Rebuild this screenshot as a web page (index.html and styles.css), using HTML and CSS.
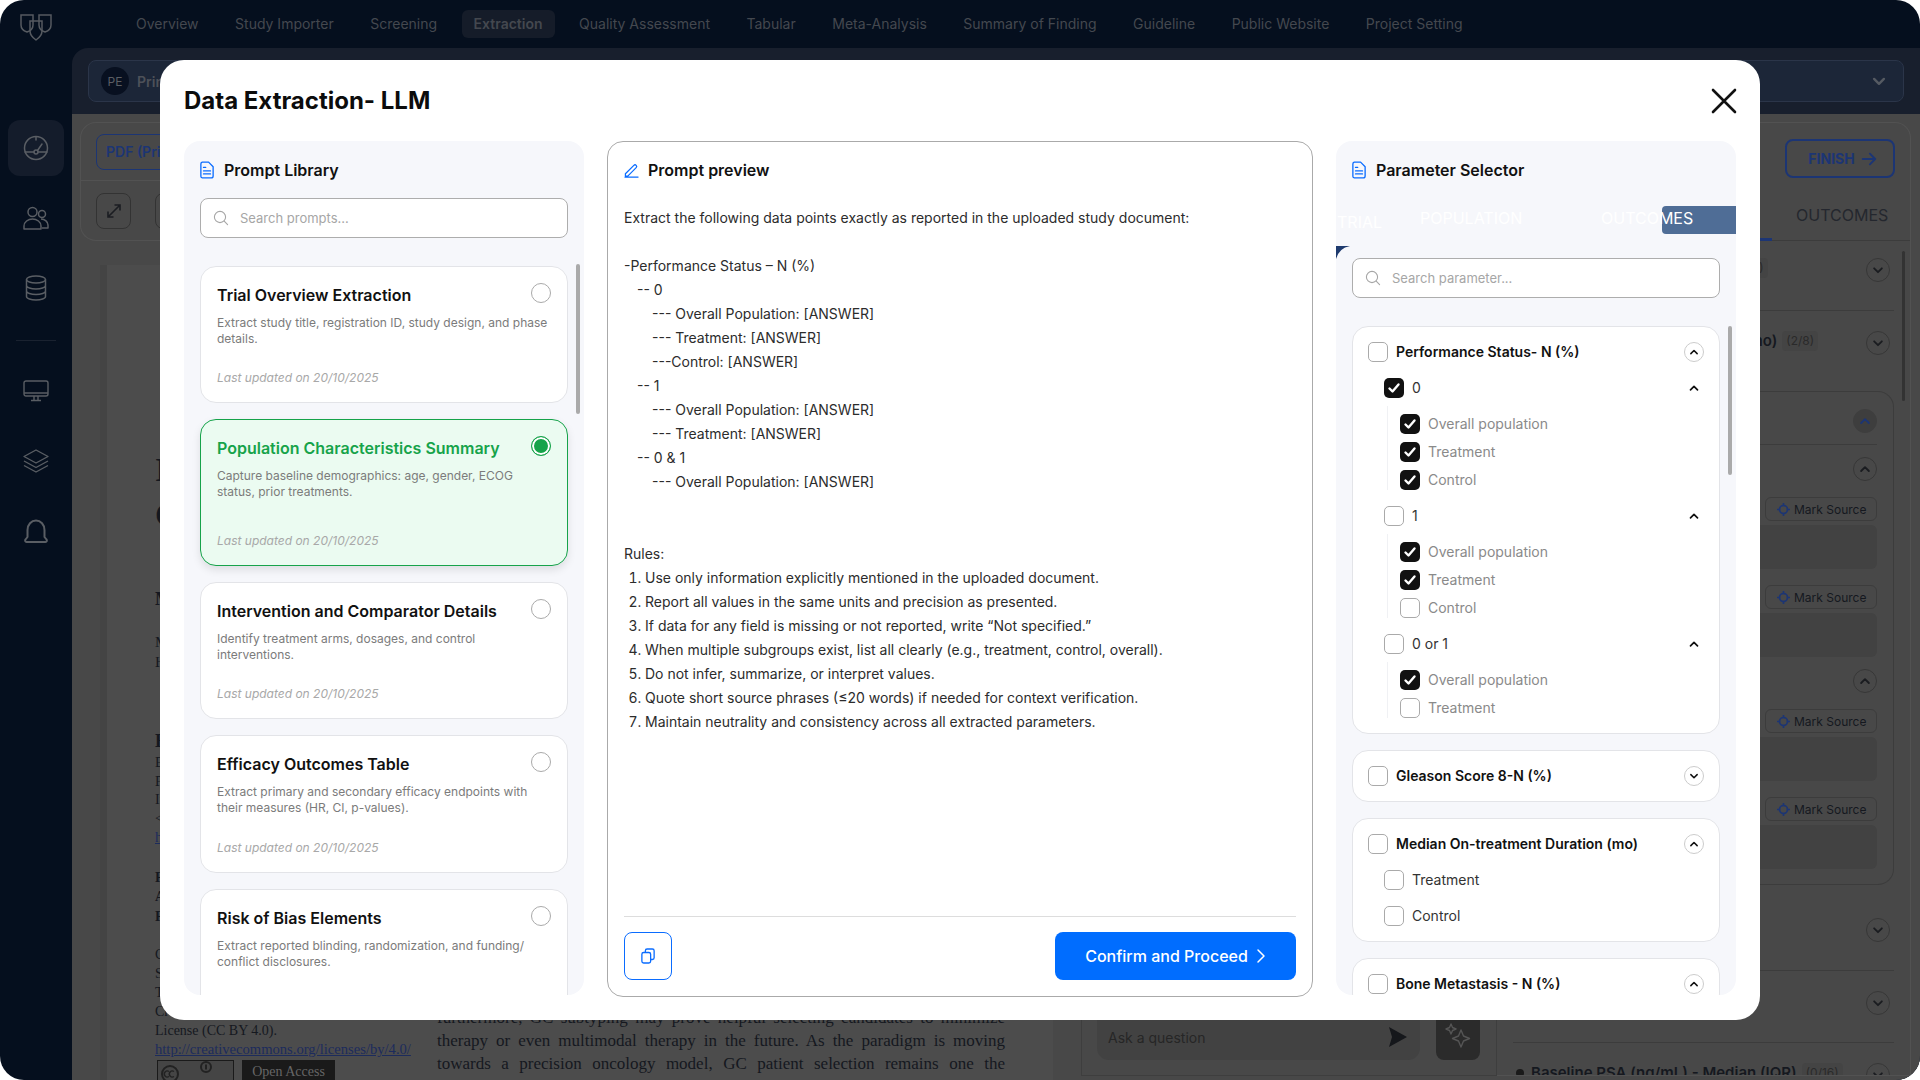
FILE: index.html
```html
<!DOCTYPE html>
<html lang="en">
  <head>
    <meta charset="UTF-8" />
    <meta name="viewport" content="width=device-width, initial-scale=1.0" />
    <title>Data Extraction - LLM</title>
    <link rel="stylesheet" href="styles.css">
  </head>
  <body>
    <svg class="sprite" width="0" height="0">
      <symbol id="i-check" viewBox="0 0 20 20"><path d="M5.500 10.500l3 3 6-7" fill="none" stroke="currentColor" stroke-width="2.400" stroke-linecap="round" stroke-linejoin="round"/></symbol>
      <symbol id="i-up" viewBox="0 0 20 20"><path d="M6.500 11.800L10 8.300l3.500 3.500" fill="none" stroke="currentColor" stroke-width="1.700" stroke-linecap="round" stroke-linejoin="round"/></symbol>
      <symbol id="i-down" viewBox="0 0 20 20"><path d="M6.500 8.500L10 12l3.500-3.500" fill="none" stroke="currentColor" stroke-width="1.700" stroke-linecap="round" stroke-linejoin="round"/></symbol>
      <symbol id="i-doc" viewBox="0 0 16 20"><path d="M2.600 1h7.200L15 6.200v10.600A2.200 2.200 0 0 1 12.800 19H2.600A2 2 0 0 1 1 16.800V3.200A2.200 2.200 0 0 1 2.600 1z" fill="none" stroke="currentColor" stroke-width="1.500" stroke-linejoin="round"/><path d="M4 7h2.500M4 11h8M4 14.500h8" fill="none" stroke="currentColor" stroke-width="1.500" stroke-linecap="round"/></symbol>
      <symbol id="i-search" viewBox="0 0 16 16"><circle cx="7" cy="7" r="5.600" fill="none" stroke="currentColor" stroke-width="1.100"/><path d="M11.200 11.200L14.600 14.600" fill="none" stroke="currentColor" stroke-width="1.100" stroke-linecap="round"/></symbol>
      <symbol id="i-target" viewBox="0 0 14 14"><circle cx="7" cy="7" r="4.300" fill="none" stroke="currentColor" stroke-width="1.800"/><path d="M7 0v3.500M7 10.500V14M0 7h3.500M10.500 7H14" fill="none" stroke="currentColor" stroke-width="1.800"/></symbol>
    </svg>

    <div class="app">
      <nav class="topnav">
        <svg class="logo" width="32" height="28" viewBox="0 0 32 28" fill="none" stroke="#565a60" stroke-width="1.500">
          <path d="M1 2h12v10c0 4-3 6-6 7-3-1-6-3-6-7z"/>
          <path d="M19 2h12v10c0 4-3 6-6 7-3-1-6-3-6-7z"/>
          <path d="M10 8h12v10c0 4-3 7-6 9-3-2-6-5-6-9z"/>
        </svg>
        <div class="nav-links">
          <a class="nav-link">Overview</a>
          <a class="nav-link">Study Importer</a>
          <a class="nav-link">Screening</a>
          <a class="nav-link active">Extraction</a>
          <a class="nav-link">Quality Assessment</a>
          <a class="nav-link">Tabular</a>
          <a class="nav-link">Meta-Analysis</a>
          <a class="nav-link">Summary of Finding</a>
          <a class="nav-link">Guideline</a>
          <a class="nav-link">Public Website</a>
          <a class="nav-link">Project Setting</a>
        </div>
      </nav>

      <div class="shell">
        <aside class="sidebar">
          <div class="side-item active">
            <svg width="26" height="26" viewBox="0 0 26 26" fill="none" stroke="#5a5e64" stroke-width="1.500" stroke-linecap="round"><circle cx="13" cy="13" r="11.500"/><circle cx="13" cy="17" r="2"/><path d="M14.500 15.500L19 9M13 2v3M2 17h9M15 17h9"/></svg>
          </div>
          <div class="side-item">
            <svg width="26" height="24" viewBox="0 0 26 24" fill="none" stroke="#5a5e64" stroke-width="1.500" stroke-linejoin="round"><circle cx="9.500" cy="6" r="4.500"/><circle cx="19" cy="8" r="3.500"/><path d="M1 23v-3c0-4 4-7 8.500-7s8.500 3 8.500 7v3z"/><path d="M18 13c4 0 7 3 7 6v3h-6"/></svg>
          </div>
          <div class="side-item">
            <svg width="22" height="26" viewBox="0 0 22 26" fill="none" stroke="#5a5e64" stroke-width="1.500"><ellipse cx="11" cy="4.500" rx="9.500" ry="3.500"/><path d="M1.500 4.500v17c0 2 4.500 3.500 9.500 3.500s9.500-1.500 9.500-3.500v-17M1.500 10.500c0 2 4.500 3.500 9.500 3.500s9.500-1.500 9.500-3.500M1.500 16c0 2 4.500 3.500 9.500 3.500s9.500-1.500 9.500-3.500"/></svg>
          </div>
          <hr class="side-rule">
          <div class="side-item">
            <svg width="26" height="22" viewBox="0 0 26 22" fill="none" stroke="#5a5e64" stroke-width="1.400" stroke-linejoin="round"><rect x="1" y="1" width="24" height="15" rx="2"/><path d="M1 13h24M11 16v4M15 16v4M8 20.500h10"/></svg>
          </div>
          <div class="side-item">
            <svg width="26" height="24" viewBox="0 0 26 24" fill="none" stroke="#5a5e64" stroke-width="1.400" stroke-linejoin="round"><path d="M13 1l12 6.500L13 14 1 7.500z"/><path d="M1 12l12 6.500L25 12M1 16.500L13 23l12-6.500"/></svg>
          </div>
          <div class="side-item">
            <svg width="26" height="24" viewBox="0 0 26 24" fill="none" stroke="#5a5e64" stroke-width="2" stroke-linejoin="round"><path d="M4.500 18V11a8.500 9.500 0 0 1 17 0v7l2 2.500a1.500 1.500 0 0 1-1 2.500H3.500a1.500 1.500 0 0 1-1-2.500z"/></svg>
          </div>
        </aside>

        <main class="workspace">
          <div class="project-bar">
            <span class="avatar">PE</span>
            <span class="project-name">Primary Endpoint Review</span>
            <svg class="project-caret" width="28" height="28"><use href="#i-down"/></svg>
          </div>

          <div class="work-area">
            <section class="reader">
              <div class="reader-tools">
                <div class="tool-row">
                  <span class="pdf-tab">PDF (Primary)</span>
                </div>
                <div class="tool-row">
                  <span class="tool-btn">
                    <svg width="18" height="18" viewBox="0 0 18 18" fill="none" stroke="#1b1d22" stroke-width="1.600"><path d="M3 15l12-12M9.500 3H15v5.500M8.500 15H3V9.500"/></svg>
                  </span>
                  <span class="tool-btn"></span>
                </div>
              </div>
              <div class="pdf-page">
                <div class="pdf-left">
                  <h1 class="pdf-title">Impact<br>Cancer</h1>
                  <h3 class="pdf-bold">Methods</h3>
                  <p class="pdf-para gap-a">Men with<br>High risk</p>
                  <h3 class="pdf-bold gap-b">Highlights</h3>
                  <p class="pdf-line">Evidence<br>Patients<br>In this<br>&lt;0.001<br><a class="pdf-link">https</a></p>
                  <p class="pdf-line bold gap-c">Footnote<br>Author<br>Funding</p>
                  <p class="pdf-note gap-d">Copyright<br>Springer<br>The article<br>Creative<br>License (CC BY 4.0).<br><a class="pdf-link">http://creativecommons.org/licenses/by/4.0/</a></p>
                  <div class="pdf-badges">
                    <span class="cc-badge">
                      <svg width="76" height="22" viewBox="0 0 76 22" fill="none" stroke="#222" stroke-width="2"><circle cx="12" cy="13" r="8"/><path d="M11 10.500a3 3 0 1 0 0 5M16 10.500a3 3 0 1 0 0 5" stroke-width="1.400"/><circle cx="48" cy="6" r="5"/><path d="M48 3.500v5"/></svg>
                    </span>
                    <span class="oa-badge">Open Access</span>
                  </div>
                </div>
                <div class="pdf-right">
                  <div class="pdf-text">furthermore, GC subtyping may prove helpful selecting candidates to minimize</div>
                  <div class="pdf-text">therapy or even multimodal therapy in the future. As the paradigm is moving</div>
                  <div class="pdf-text">towards a precision oncology model, GC patient selection remains one the</div>
                </div>
              </div>
            </section>

            <section class="chat">
              <div class="chat-input">
                <span class="chat-hint">Ask a question</span>
                <svg width="20" height="22" viewBox="0 0 20 22" fill="#15171b"><path d="M1 1l18 10L1 21l3-10z"/></svg>
              </div>
              <div class="chat-spark">
                <svg width="30" height="30" viewBox="0 0 30 30" fill="none" stroke="#555" stroke-width="1.400" stroke-linejoin="round"><path d="M18 9l2.500 6 6 2.500-6 2.500-2.500 6-2.500-6-6-2.500 6-2.500zM8 3l1.500 3.500L13 8 9.500 9.500 8 13 6.500 9.500 3 8l3.500-1.500z"/></svg>
              </div>
            </section>

            <section class="fields">
              <div class="fields-top">
                <span class="finish-btn">FINISH
                  <svg width="16" height="16" viewBox="0 0 18 16" fill="none" stroke="currentColor" stroke-width="2.200" stroke-linecap="round" stroke-linejoin="round"><path d="M2 8h14M10 2l6 6-6 6"/></svg>
                </span>
              </div>
              <div class="field-tabs">
                <span class="field-tab">TRIAL</span>
                <span class="field-tab active">POPULATION</span>
                <span class="field-tab">OUTCOMES</span>
              </div>
              <div class="field-scroll"></div>
              <div class="field-list">
                <div class="field-item first">
                  <span class="field-name">Median Follow-up Duration</span><span class="field-count">(3/8)</span>
                  <span class="round-btn"><svg width="22" height="22"><use href="#i-down"/></svg></span>
                </div>
                <div class="field-item second">
                  <span class="field-name">Median On-treatment Duration (mo)</span><span class="field-count">(2/8)</span>
                  <span class="round-btn"><svg width="22" height="22"><use href="#i-down"/></svg></span>
                </div>
                <div class="field-open">
                  <div class="open-head">
                    <span class="round-btn on"><svg width="22" height="22"><use href="#i-up"/></svg></span>
                  </div>
                  <div class="open-sub">
                    <span class="round-btn"><svg width="22" height="22"><use href="#i-up"/></svg></span>
                  </div>
                  <div class="source">
                    <span class="mark-source"><svg width="13" height="13"><use href="#i-target"/></svg>Mark Source</span>
                    <div class="source-box"></div>
                  </div>
                  <div class="source">
                    <span class="mark-source"><svg width="13" height="13"><use href="#i-target"/></svg>Mark Source</span>
                    <div class="source-box"></div>
                  </div>
                  <div class="open-sub tight">
                    <span class="round-btn"><svg width="22" height="22"><use href="#i-up"/></svg></span>
                  </div>
                  <div class="source">
                    <span class="mark-source"><svg width="13" height="13"><use href="#i-target"/></svg>Mark Source</span>
                    <div class="source-box"></div>
                  </div>
                  <div class="source">
                    <span class="mark-source"><svg width="13" height="13"><use href="#i-target"/></svg>Mark Source</span>
                    <div class="source-box"></div>
                  </div>
                </div>
                <div class="field-item third">
                  <span class="round-btn"><svg width="22" height="22"><use href="#i-down"/></svg></span>
                </div>
                <div class="field-item fourth">
                  <span class="field-sub">1 field</span>
                  <span class="round-btn"><svg width="22" height="22"><use href="#i-down"/></svg></span>
                </div>
                <div class="field-item fifth">
                  <span class="field-dot"></span><span class="field-name">Baseline PSA (ng/mL) - Median (IQR)</span><span class="field-count">(0/16)</span>
                  <span class="round-btn"><svg width="22" height="22"><use href="#i-down"/></svg></span>
                </div>
              </div>
            </section>
          </div>
        </main>
      </div>
    </div>

    <div class="modal">
      <header class="modal-head">
        <h2 class="modal-title">Data Extraction- LLM</h2>
        <svg class="modal-close" width="26" height="26" viewBox="0 0 26 26" fill="none" stroke="#111" stroke-width="2.600" stroke-linecap="round"><path d="M2 2l22 22M24 2L2 24"/></svg>
      </header>

      <div class="modal-body">
        <section class="panel library">
          <h3 class="panel-head"><svg class="blue" width="14" height="18"><use href="#i-doc"/></svg>Prompt Library</h3>
          <label class="search">
            <svg width="16" height="16"><use href="#i-search"/></svg>
            <span>Search prompts...</span>
          </label>
          <div class="thumb library-thumb"></div>
          <div class="prompt-list">
            <article class="prompt">
              <div class="prompt-top"><h4>Trial Overview Extraction</h4><span class="radio"></span></div>
              <p class="prompt-desc">Extract study title, registration ID, study design, and phase details.</p>
              <p class="prompt-date">Last updated on 20/10/2025</p>
            </article>
            <article class="prompt selected">
              <div class="prompt-top"><h4>Population Characteristics Summary</h4><span class="radio"></span></div>
              <p class="prompt-desc">Capture baseline demographics: age, gender, ECOG status, prior treatments.</p>
              <p class="prompt-date">Last updated on 20/10/2025</p>
            </article>
            <article class="prompt">
              <div class="prompt-top"><h4>Intervention and Comparator Details</h4><span class="radio"></span></div>
              <p class="prompt-desc">Identify treatment arms, dosages, and control interventions.</p>
              <p class="prompt-date">Last updated on 20/10/2025</p>
            </article>
            <article class="prompt">
              <div class="prompt-top"><h4>Efficacy Outcomes Table</h4><span class="radio"></span></div>
              <p class="prompt-desc">Extract primary and secondary efficacy endpoints with their measures (HR, CI, p-values).</p>
              <p class="prompt-date">Last updated on 20/10/2025</p>
            </article>
            <article class="prompt">
              <div class="prompt-top"><h4>Risk of Bias Elements</h4><span class="radio"></span></div>
              <p class="prompt-desc">Extract reported blinding, randomization, and funding/ conflict disclosures.</p>
            </article>
          </div>
        </section>

        <section class="panel preview">
          <h3 class="panel-head"><svg class="blue" width="15" height="15" viewBox="0 0 16 16" fill="none" stroke="currentColor" stroke-width="1.300" stroke-linejoin="round" stroke-linecap="round"><path d="M1.500 11.500L10.500 2.500a1.500 1.500 0 0 1 2.500 2.500L4 14H1.500zM1 15h14"/></svg>Prompt preview</h3>
          <div class="preview-text">
            <p>Extract the following data points exactly as reported in the uploaded study document:</p>
            <p class="blank"></p>
            <p>-Performance Status – N (%)</p>
            <p class="lvl-1">-- 0</p>
            <p class="lvl-2">--- Overall Population: [ANSWER]</p>
            <p class="lvl-2">--- Treatment: [ANSWER]</p>
            <p class="lvl-2">---Control: [ANSWER]</p>
            <p class="lvl-1">-- 1</p>
            <p class="lvl-2">--- Overall Population: [ANSWER]</p>
            <p class="lvl-2">--- Treatment: [ANSWER]</p>
            <p class="lvl-1">-- 0 &amp; 1</p>
            <p class="lvl-2">--- Overall Population: [ANSWER]</p>
            <p class="blank wide"></p>
            <p>Rules:</p>
            <ol>
              <li>Use only information explicitly mentioned in the uploaded document.</li>
              <li>Report all values in the same units and precision as presented.</li>
              <li>If data for any field is missing or not reported, write “Not specified.”</li>
              <li>When multiple subgroups exist, list all clearly (e.g., treatment, control, overall).</li>
              <li>Do not infer, summarize, or interpret values.</li>
              <li>Quote short source phrases (≤20 words) if needed for context verification.</li>
              <li>Maintain neutrality and consistency across all extracted parameters.</li>
            </ol>
          </div>
          <footer class="preview-foot">
            <button class="copy-btn">
              <svg width="14" height="16" viewBox="0 0 16 18" fill="none" stroke="currentColor" stroke-width="1.500" stroke-linejoin="round"><rect x="1" y="5" width="10" height="12" rx="2"/><path d="M5 5V3a2 2 0 0 1 2-2h6a2 2 0 0 1 2 2v8a2 2 0 0 1-2 2h-2"/></svg>
            </button>
            <button class="confirm-btn">Confirm and Proceed
              <svg width="10" height="16" viewBox="0 0 10 16" fill="none" stroke="currentColor" stroke-width="1.500" stroke-linecap="round" stroke-linejoin="round"><path d="M2 2l6 6-6 6"/></svg>
            </button>
          </footer>
        </section>

        <section class="panel params">
          <h3 class="panel-head"><svg class="blue" width="14" height="18"><use href="#i-doc"/></svg>Parameter Selector</h3>
          <div class="param-tabs">
            <span class="param-tab-bg"></span>
            <span class="param-tab trial">TRIAL</span>
            <span class="param-tab">POPULATION</span>
            <span class="param-tab">OUTCOMES</span>
          </div>
          <svg class="param-notch" width="14" height="13" viewBox="0 0 14 13"><path d="M0 0h14Q3 2 0 13z" fill="#1e3a6e"/></svg>
          <label class="search">
            <svg width="16" height="16"><use href="#i-search"/></svg>
            <span>Search parameter...</span>
          </label>
          <div class="thumb params-thumb"></div>
          <div class="param-list">
            <div class="param-card">
              <div class="param-scroll">
                <div class="check-row head">
                  <span class="box"></span><span class="check-label">Performance Status- N (%)</span>
                  <span class="circle-btn"><svg width="18" height="18"><use href="#i-up"/></svg></span>
                </div>
                <div class="check-row sub">
                  <span class="box on"><svg width="20" height="20"><use href="#i-check"/></svg></span><span class="check-label">0</span>
                  <svg class="row-caret" width="20" height="20"><use href="#i-up"/></svg>
                </div>
                <div class="leaf-group">
                  <div class="check-row leaf"><span class="box on"><svg width="20" height="20"><use href="#i-check"/></svg></span><span class="check-label">Overall population</span></div>
                  <div class="check-row leaf"><span class="box on"><svg width="20" height="20"><use href="#i-check"/></svg></span><span class="check-label">Treatment</span></div>
                  <div class="check-row leaf"><span class="box on"><svg width="20" height="20"><use href="#i-check"/></svg></span><span class="check-label">Control</span></div>
                </div>
                <div class="check-row sub">
                  <span class="box"></span><span class="check-label">1</span>
                  <svg class="row-caret" width="20" height="20"><use href="#i-up"/></svg>
                </div>
                <div class="leaf-group">
                  <div class="check-row leaf"><span class="box on"><svg width="20" height="20"><use href="#i-check"/></svg></span><span class="check-label">Overall population</span></div>
                  <div class="check-row leaf"><span class="box on"><svg width="20" height="20"><use href="#i-check"/></svg></span><span class="check-label">Treatment</span></div>
                  <div class="check-row leaf"><span class="box"></span><span class="check-label">Control</span></div>
                </div>
                <div class="check-row sub">
                  <span class="box"></span><span class="check-label">0 or 1</span>
                  <svg class="row-caret" width="20" height="20"><use href="#i-up"/></svg>
                </div>
                <div class="leaf-group">
                  <div class="check-row leaf"><span class="box on"><svg width="20" height="20"><use href="#i-check"/></svg></span><span class="check-label">Overall population</span></div>
                  <div class="check-row leaf"><span class="box"></span><span class="check-label">Treatment</span></div>
                </div>
              </div>
            </div>
            <div class="param-card">
              <div class="check-row head">
                <span class="box"></span><span class="check-label">Gleason Score 8-N (%)</span>
                <span class="circle-btn"><svg width="18" height="18"><use href="#i-down"/></svg></span>
              </div>
            </div>
            <div class="param-card">
              <div class="check-row head">
                <span class="box"></span><span class="check-label">Median On-treatment Duration (mo)</span>
                <span class="circle-btn"><svg width="18" height="18"><use href="#i-up"/></svg></span>
              </div>
              <div class="check-row sub"><span class="box"></span><span class="check-label">Treatment</span></div>
              <div class="check-row sub"><span class="box"></span><span class="check-label">Control</span></div>
            </div>
            <div class="param-card">
              <div class="check-row head">
                <span class="box"></span><span class="check-label">Bone Metastasis - N (%)</span>
                <span class="circle-btn"><svg width="18" height="18"><use href="#i-up"/></svg></span>
              </div>
            </div>
          </div>
        </section>
      </div>
    </div>
  </body>
</html>
```

FILE: styles.css
```css
* {
  box-sizing: border-box;
}
body {
  margin: 0;
  height: 1080px;
  overflow: hidden;
  background: #fff;
  font-family: Inter, "Liberation Sans", sans-serif;
}
h1, h2, h3, h4, p, ol {
  margin: 0;
}
.sprite {
  position: absolute;
}

/* page behind the dialog, already dimmed */
.app {
  display: flex;
  flex-direction: column;
  width: 1920px;
  height: 1080px;
  overflow: hidden;
  background: #050f1e;
  border-radius: 24px;
}
.topnav {
  display: flex;
  align-items: center;
  flex: none;
  height: 48px;
  padding-left: 20px;
}
.logo {
  flex: none;
  margin-top: 6px;
}
.nav-links {
  display: flex;
  gap: 12.5px;
  margin-left: 72px;
}
.nav-link {
  padding: 0 12px;
  height: 28px;
  line-height: 28px;
  font-size: 14px;
  color: #44484f;
  border-radius: 6px;
}
.nav-link.active {
  background: #151c29;
  font-weight: 600;
}
.shell {
  display: flex;
  flex: 1;
  min-height: 0;
}
.sidebar {
  display: flex;
  flex-direction: column;
  align-items: center;
  flex: none;
  width: 72px;
}
.side-item {
  display: flex;
  align-items: center;
  justify-content: center;
  width: 56px;
  height: 56px;
  margin-top: 14px;
  border-radius: 12px;
}
.side-item.active {
  margin-top: 72px;
  background: #141c2b;
}
.side-rule {
  width: 40px;
  margin: 24px 0 8px;
  border: 0;
  border-top: 1px solid #1a2230;
}
.workspace {
  display: flex;
  flex-direction: column;
  flex: 1;
  min-width: 0;
  background: #181f2d;
  border-top-left-radius: 16px;
  overflow: hidden;
}
.project-bar {
  display: flex;
  align-items: center;
  flex: none;
  height: 42px;
  margin: 12px 16px;
  padding: 0 10px 0 12px;
  background: #1c2638;
  border: 1px solid #2b3549;
  border-radius: 8px;
}
.avatar {
  display: flex;
  align-items: center;
  justify-content: center;
  width: 28px;
  height: 28px;
  font-size: 12px;
  color: #5a5e64;
  background: #081020;
  border-radius: 50%;
}
.project-name {
  margin-left: 8px;
  font-size: 14px;
  font-weight: 600;
  color: #4d5159;
}
.project-caret {
  margin-left: auto;
  color: #555a62;
}
.work-area {
  display: grid;
  grid-template-columns: 1009px 416px 414px;
  flex: 1;
  min-height: 0;
  padding-right: 9px;
  background: #484848;
}
.reader {
  padding: 8px 0 0 8px;
  min-width: 0;
}
.reader-tools {
  height: 119px;
  border: 1px solid #525252;
  border-right: 0;
  border-radius: 16px 0 0 16px;
}
.tool-row {
  display: flex;
  align-items: center;
  gap: 24px;
  height: 58px;
  padding: 0 15px;
  border-bottom: 1px solid #525252;
}
.tool-row:last-child {
  height: 59px;
  border-bottom: 0;
}
.pdf-tab {
  padding: 0 9px;
  height: 36px;
  line-height: 34px;
  font-size: 14px;
  font-weight: 600;
  color: #1c3574;
  border: 1px solid #1c3574;
  border-radius: 8px;
}
.tool-btn {
  display: flex;
  align-items: center;
  justify-content: center;
  width: 35px;
  height: 36px;
  border: 1px solid #333;
  border-radius: 8px;
}
.pdf-page {
  display: flex;
  height: 815px;
  margin: 24px 28px 0 27px;
  padding-left: 48px;
  overflow: hidden;
  background: #4c4c4c;
  box-shadow: -7px 0 0 #444;
  color: #15181f;
  font-family: "Liberation Serif", serif;
}
.pdf-left {
  flex: none;
  width: 282px;
  padding-top: 182px;
}
.pdf-title {
  font-size: 34px;
  line-height: 45px;
  font-weight: 700;
}
.pdf-bold {
  margin-top: 52px;
  font-size: 18px;
  line-height: 20px;
  font-weight: 700;
}
.pdf-para {
  font-size: 15px;
  line-height: 20px;
}
.gap-a {
  margin-top: 23px;
}
.pdf-bold.gap-b {
  margin-top: 59px;
}
.pdf-line {
  margin-top: 3px;
  font-size: 14px;
  line-height: 18.500px;
}
.pdf-line.bold {
  font-weight: 700;
}
.pdf-line.gap-c {
  margin-top: 20px;
  line-height: 19.500px;
}
.pdf-note {
  font-size: 14px;
  line-height: 19px;
  white-space: nowrap;
}
.gap-d {
  margin-top: 19px;
}
.pdf-link {
  color: #1c2b5c;
  text-decoration: underline;
  font-size: 14.600px;
}
.pdf-badges {
  display: flex;
  gap: 8px;
  margin: 1px 0 0 2px;
}
.cc-badge {
  width: 77px;
  height: 24px;
  background: #454545;
  border: 1px solid #1a1a1a;
}
.oa-badge {
  width: 93px;
  height: 24px;
  line-height: 24px;
  text-align: center;
  font-size: 14px;
  color: #666;
  background: #1a1a1a;
}
.pdf-right {
  flex: none;
  width: 568px;
  padding-top: 741px;
}
.pdf-text {
  font-size: 17px;
  line-height: 23px;
  text-align: justify;
  text-align-last: justify;
  white-space: nowrap;
}
.chat {
  display: flex;
  align-items: flex-end;
  gap: 16px;
  padding: 0 16px 15px 15px;
  margin-bottom: 4px;
  border: 1px solid #3e3e3e;
  border-top: 0;
}
.chat-input {
  display: flex;
  align-items: center;
  justify-content: space-between;
  width: 324px;
  height: 48px;
  padding: 2px 12px 0 11px;
  background: #424242;
  border-radius: 0 0 12px 12px;
}
.chat-hint {
  font-size: 14px;
  color: #262626;
}
.chat-spark {
  display: flex;
  align-items: center;
  justify-content: center;
  width: 44px;
  height: 48px;
  background: #2b2b2b;
  border-radius: 8px;
}
.fields {
  position: relative;
  margin: 8px 0 4px;
  border: 1px solid #525252;
  border-left: 0;
  border-radius: 0 16px 0 0;
  overflow: hidden;
}
.fields-top {
  display: flex;
  justify-content: flex-end;
  padding: 16px 15px 0 0;
}
.finish-btn {
  display: flex;
  align-items: center;
  justify-content: center;
  gap: 6px;
  width: 110px;
  height: 39px;
  padding-left: 5px;
  font-size: 14px;
  font-weight: 700;
  color: #1c3574;
  border: 2px solid #1c3574;
  border-radius: 8px;
}
.field-tabs {
  display: grid;
  grid-template-columns: repeat(3, 1fr);
  height: 63px;
  border-bottom: 1px solid #3c3c3c;
}
.field-tab {
  padding: 27px 0 0 2px;
  text-align: center;
  font-size: 16px;
  color: #24272e;
}
.field-tab.active {
  height: 63px;
  color: #1c3574;
  border-bottom: 3px solid #1c3574;
}
.field-scroll {
  position: absolute;
  top: 128px;
  right: 5px;
  width: 3px;
  height: 150px;
  background: #333;
  border-radius: 2px;
}
.field-list {
  padding: 0 16px;
}
.field-item {
  position: relative;
  display: flex;
  align-items: flex-start;
  gap: 5px;
  padding-left: 18px;
  font-size: 15px;
  font-weight: 600;
  color: #15181f;
  border-bottom: 1px solid #3c3c3c;
}
.field-item.first {
  height: 70px;
  padding-top: 17px;
}
.field-item.second {
  height: 80px;
  padding: 20px 0 0 5px;
  border-bottom: 0;
}
.field-item.third {
  height: 86px;
  padding-top: 33px;
}
.field-item.fourth {
  height: 72px;
  padding-top: 20px;
}
.field-item.fifth {
  height: 36px;
  padding-top: 20px;
  border-bottom: 0;
}
.field-name {
  white-space: nowrap;
}
.field-count {
  padding: 0 4px;
  font-size: 12px;
  font-weight: 400;
  line-height: 20px;
  color: #2a2a2a;
  background: #444;
  border-radius: 4px;
}
.field-sub {
  font-size: 13px;
  font-weight: 400;
  color: #2a2a2a;
}
.field-dot {
  position: absolute;
  left: 3px;
  top: 26px;
  width: 8px;
  height: 8px;
  background: #1a1a1a;
  border-radius: 50%;
}
.round-btn {
  position: absolute;
  right: 4px;
  display: flex;
  align-items: center;
  justify-content: center;
  width: 24px;
  height: 24px;
  color: #1a1c20;
  border: 1px solid #373737;
  border-radius: 50%;
}
.field-open {
  height: 494px;
  padding: 17px 16px 16px;
  border: 1px solid #3c3c3c;
  border-left: 0;
  border-radius: 0 16px 16px 0;
}
.open-head,
.open-sub {
  position: relative;
  height: 36px;
  border-bottom: 1px solid #3c3c3c;
}
.open-head .round-btn,
.open-sub .round-btn {
  right: 0;
  top: 0;
}
.open-sub {
  height: 40px;
  margin-top: 12px;
  border-bottom: 0;
}
.open-sub.tight {
  margin-top: -4px;
}
.round-btn.on {
  color: #1c3574;
  background: #3e3e3e;
  border-color: #3e3e3e;
}
.source {
  display: flex;
  flex-direction: column;
  align-items: flex-end;
  margin-bottom: 16px;
}
.mark-source {
  display: flex;
  align-items: center;
  gap: 4px;
  width: 112px;
  height: 24px;
  padding-left: 11px;
  font-size: 12px;
  color: #15181f;
  border: 1px solid #3c3c3c;
  border-radius: 6px;
}
.mark-source svg {
  color: #1c3574;
}
.source-box {
  width: 100%;
  height: 44px;
  margin-top: 4px;
  background: #424242;
  border-radius: 6px;
}

/* dialog */
.modal {
  position: fixed;
  top: 60px;
  left: 160px;
  display: flex;
  flex-direction: column;
  width: 1600px;
  height: 960px;
  padding: 0 24px 25px;
  background: #fff;
  border-radius: 24px;
}
.modal-head {
  display: flex;
  align-items: center;
  justify-content: space-between;
  flex: none;
  height: 81px;
  padding-top: 1px;
}
.modal-title {
  font-size: 24px;
  line-height: 80px;
  font-weight: 700;
  color: #0c0c0c;
}
.modal-close {
  margin-right: -1px;
}
.modal-body {
  display: grid;
  grid-template-columns: 400px 704px 400px;
  gap: 24px;
  flex: 1;
  min-height: 0;
}
.panel {
  position: relative;
  display: flex;
  flex-direction: column;
  min-height: 0;
  padding: 19px 16px 0;
  overflow: hidden;
  background: #f6f7fb;
  border-radius: 16px;
}
.panel-head {
  display: flex;
  align-items: center;
  gap: 10px;
  flex: none;
  height: 20px;
  font-size: 16px;
  line-height: 20px;
  font-weight: 600;
  color: #111;
}
.blue {
  color: #0a6cff;
}
.search {
  display: flex;
  align-items: center;
  gap: 11px;
  flex: none;
  height: 40px;
  padding: 0 12px;
  font-size: 13px;
  color: #a6a6a6;
  background: #fff;
  border: 1px solid #adadad;
  border-radius: 8px;
}
.thumb {
  position: absolute;
  right: 4px;
  width: 4px;
  background: #aaa;
  border-radius: 2px;
}
.library .search {
  margin-top: 18px;
}
.library-thumb {
  top: 123px;
  height: 150px;
}
.prompt-list {
  display: flex;
  flex-direction: column;
  gap: 16px;
  margin-top: 28px;
}
.prompt {
  display: flex;
  flex-direction: column;
  flex: none;
  height: 137.500px;
  padding: 16px;
  background: #fff;
  border: 1px solid #e3e4e8;
  border-radius: 16px;
}
.prompt:first-child {
  height: 137px;
}
.prompt-top {
  display: flex;
  justify-content: space-between;
}
.prompt-top h4 {
  font-size: 16px;
  line-height: 24px;
  font-weight: 600;
  color: #111;
}
.radio {
  flex: none;
  width: 20px;
  height: 20px;
  background: #fff;
  border: 1px solid #aaa;
  border-radius: 50%;
}
.prompt-desc {
  margin-top: 8px;
  font-size: 12px;
  line-height: 16px;
  color: #7b7b7b;
}
.prompt-date {
  margin-top: auto;
  font-size: 12px;
  line-height: 16px;
  font-style: italic;
  color: #a8a8a8;
}
.prompt.selected {
  height: 146.500px;
  background: #ebfbf1;
  border-color: #16a34a;
  box-shadow: 0 4px 8px rgba(0, 0, 0, 0.1);
}
.prompt.selected h4 {
  color: #16a34a;
}
.prompt.selected .radio {
  background: #16a34a;
  border: 1px solid #16a34a;
  box-shadow: inset 0 0 0 2px #fff;
}
.preview {
  margin: 0 -1px -2px;
  padding: 18px 16px 16px;
  background: #fff;
  border: 1px solid #aaa;
}
.preview .panel-head {
  gap: 9px;
}
.preview-text {
  flex: 1;
  margin-top: 26px;
  font-size: 14px;
  line-height: 24px;
  color: #2c2c2c;
}
.preview-text p {
  white-space: pre;
}
.preview-text .blank {
  height: 24px;
}
.preview-text .blank.wide {
  height: 48px;
}
.preview-text .lvl-1 {
  padding-left: 13px;
}
.preview-text .lvl-2 {
  padding-left: 28px;
}
.preview-text ol {
  padding-left: 21px;
}
.preview-foot {
  display: flex;
  align-items: center;
  justify-content: space-between;
  flex: none;
  height: 64px;
  padding-top: 15px;
  border-top: 1px solid #ddd;
}
.copy-btn {
  display: flex;
  align-items: center;
  justify-content: center;
  width: 48px;
  height: 48px;
  padding: 0;
  color: #0a6cff;
  background: #fff;
  border: 1px solid #0a6cff;
  border-radius: 8px;
}
.confirm-btn {
  display: flex;
  align-items: center;
  justify-content: center;
  gap: 8px;
  width: 241px;
  height: 48px;
  padding: 0;
  font-family: inherit;
  font-size: 16px;
  font-weight: 500;
  color: #fff;
  background: #006dff;
  border: 0;
  border-radius: 8px;
}
.param-tabs {
  position: relative;
  display: grid;
  grid-template-columns: 83px 181px auto;
  flex: none;
  height: 28px;
  margin: 26px -16px 0;
  padding-left: 1px;
  font-size: 16px;
  line-height: 24px;
  color: #fff;
}
.param-tab {
  position: relative;
}
.param-tab.trial {
  padding-top: 4px;
}
.param-tab-bg {
  position: absolute;
  top: 0;
  right: 0;
  width: 74px;
  height: 28px;
  background: #4f6d96;
  border-radius: 4px 0 0 4px;
}
.param-notch {
  position: absolute;
  top: 105px;
  left: 0;
}
.params .search {
  margin-top: 24px;
}
.params-thumb {
  top: 185px;
  height: 149px;
}
.param-list {
  display: flex;
  flex-direction: column;
  gap: 16px;
  margin-top: 28px;
}
.param-card {
  flex: none;
  padding: 15px;
  background: #fff;
  border: 1px solid #e3e4e8;
  border-radius: 16px;
}
.param-scroll {
  height: 376px;
  overflow: hidden;
}
.check-row {
  display: flex;
  align-items: center;
  gap: 8px;
  height: 20px;
  font-size: 14px;
}
.check-label {
  margin-bottom: 1px;
}
.check-row.head {
  font-weight: 600;
  color: #111;
}
.check-row.sub {
  margin: 16px 0 0 16px;
  color: #333;
}
.check-row.leaf {
  margin-top: 8px;
  color: #8a8a8a;
}
.check-row.leaf:first-child {
  margin-top: 0;
}
.leaf-group {
  margin: 8px 0 16px 19px;
  padding: 8px 0 0 12px;
  border-left: 1px solid #f0f1f4;
}
.leaf-group + .check-row.sub {
  margin-top: 0;
}
.box {
  flex: none;
  width: 20px;
  height: 20px;
  background: #fff;
  border: 1px solid #aaa;
  border-radius: 5px;
}
.box.on {
  color: #fff;
  background: #111;
  border: 0;
}
.box svg {
  display: block;
}
.circle-btn {
  display: flex;
  align-items: center;
  justify-content: center;
  width: 20px;
  height: 20px;
  margin-left: auto;
  color: #111;
  border: 1px solid #ccc;
  border-radius: 50%;
}
.row-caret {
  margin-left: auto;
  color: #111;
}
```
